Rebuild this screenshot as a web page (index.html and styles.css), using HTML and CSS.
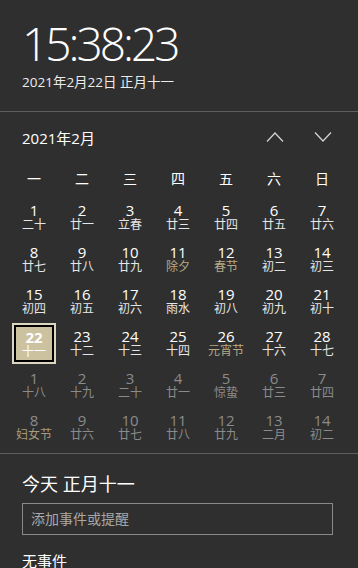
FILE: index.html
```html
<!DOCTYPE html>
<html lang="zh-CN">
<head>
  <meta charset="UTF-8" />
  <meta name="viewport" content="width=device-width, initial-scale=1.0" />
  <title>日历</title>
  <link rel="stylesheet" href="styles.css">
</head>
<body>
  <div class="painel">
    <!-- Relógio -->
    <div class="relogio">
      <div class="hora">15:38:23</div>
      <div class="data">2021年2月22日 正月十一</div>
    </div>

    <!-- Calendário -->
    <div class="calendario">
      <div class="cabecalho">
        <span class="mes">2021年2月</span>
        <div class="setas">
          <svg class="seta" width="18" height="12" viewBox="0 0 18 12"><path d="M1 10.5 L9 2 L17 10.5" fill="none" stroke="#d6d6d6" stroke-width="1.2"/></svg>
          <svg class="seta" width="18" height="12" viewBox="0 0 18 12"><path d="M1 1.5 L9 10 L17 1.5" fill="none" stroke="#d6d6d6" stroke-width="1.2"/></svg>
        </div>
      </div>

      <div class="grade">
        <div class="semana">一</div><div class="semana">二</div><div class="semana">三</div><div class="semana">四</div><div class="semana">五</div><div class="semana">六</div><div class="semana">日</div>

        <div class="dia"><b>1</b><i>二十</i></div>
        <div class="dia"><b>2</b><i>廿一</i></div>
        <div class="dia"><b>3</b><i>立春</i></div>
        <div class="dia"><b>4</b><i>廿三</i></div>
        <div class="dia"><b>5</b><i>廿四</i></div>
        <div class="dia"><b>6</b><i>廿五</i></div>
        <div class="dia"><b>7</b><i>廿六</i></div>

        <div class="dia"><b>8</b><i>廿七</i></div>
        <div class="dia"><b>9</b><i>廿八</i></div>
        <div class="dia"><b>10</b><i>廿九</i></div>
        <div class="dia feriado"><b>11</b><i>除夕</i></div>
        <div class="dia feriado"><b>12</b><i>春节</i></div>
        <div class="dia"><b>13</b><i>初二</i></div>
        <div class="dia"><b>14</b><i>初三</i></div>

        <div class="dia"><b>15</b><i>初四</i></div>
        <div class="dia"><b>16</b><i>初五</i></div>
        <div class="dia"><b>17</b><i>初六</i></div>
        <div class="dia"><b>18</b><i>雨水</i></div>
        <div class="dia"><b>19</b><i>初八</i></div>
        <div class="dia"><b>20</b><i>初九</i></div>
        <div class="dia"><b>21</b><i>初十</i></div>

        <div class="dia hoje"><b>22</b><i>十一</i></div>
        <div class="dia"><b>23</b><i>十二</i></div>
        <div class="dia"><b>24</b><i>十三</i></div>
        <div class="dia"><b>25</b><i>十四</i></div>
        <div class="dia feriado"><b>26</b><i>元宵节</i></div>
        <div class="dia"><b>27</b><i>十六</i></div>
        <div class="dia"><b>28</b><i>十七</i></div>

        <div class="dia fora"><b>1</b><i>十八</i></div>
        <div class="dia fora"><b>2</b><i>十九</i></div>
        <div class="dia fora"><b>3</b><i>二十</i></div>
        <div class="dia fora"><b>4</b><i>廿一</i></div>
        <div class="dia fora"><b>5</b><i>惊蛰</i></div>
        <div class="dia fora"><b>6</b><i>廿三</i></div>
        <div class="dia fora"><b>7</b><i>廿四</i></div>

        <div class="dia fora feriado"><b>8</b><i>妇女节</i></div>
        <div class="dia fora"><b>9</b><i>廿六</i></div>
        <div class="dia fora"><b>10</b><i>廿七</i></div>
        <div class="dia fora"><b>11</b><i>廿八</i></div>
        <div class="dia fora"><b>12</b><i>廿九</i></div>
        <div class="dia fora"><b>13</b><i>二月</i></div>
        <div class="dia fora"><b>14</b><i>初二</i></div>
      </div>
    </div>

    <!-- Agenda -->
    <div class="agenda">
      <div class="titulo">今天 正月十一</div>
      <div class="campo">添加事件或提醒</div>
      <div class="vazio">无事件</div>
    </div>
  </div>
</body>
</html>
```

FILE: styles.css
```css
:root {
  --cor-fundo: #2f2f2f;
  --cor-linha: #5e5e5e;
  --cor-texto: #ffffff;
  --cor-apagado: #8b8b8b;
  --cor-feriado: #b7a986;
  --cor-destaque: #cdc2a0;
}

* {
  box-sizing: border-box;
  margin: 0;
  padding: 0;
}

body {
  background: var(--cor-fundo);
  color: var(--cor-texto);
  font-family: 'Open Sans', 'Noto Sans CJK SC', sans-serif;
  width: 358px;
  height: 568px;
  overflow: hidden;
}

.relogio {
  height: 112px;
  padding: 20px 22px 0;
  border-bottom: 1px solid var(--cor-linha);
}

.hora {
  font-size: 46px;
  font-weight: 300;
  line-height: 46px;
  letter-spacing: -3px;
}

.data {
  font-size: 13.5px;
  line-height: 20px;
  margin-top: 6px;
  color: #ececec;
}

.cabecalho {
  display: flex;
  align-items: center;
  justify-content: space-between;
  height: 50px;
  padding: 0 26px 0 22px;
}

.mes {
  font-size: 15px;
}

.setas {
  display: flex;
  gap: 30px;
}

.grade {
  display: grid;
  grid-template-columns: repeat(7, 48px);
  grid-template-rows: 32px;
  grid-auto-rows: 42px;
  padding: 0 0 0 10px;
  height: 291px;
}

.semana {
  display: flex;
  align-items: center;
  justify-content: center;
  font-size: 14px;
}

.dia {
  display: flex;
  flex-direction: column;
  align-items: center;
  justify-content: center;
  margin: 3px 2px 0;
}

.dia b {
  font-weight: 400;
  font-size: 15px;
  line-height: 16px;
}

.dia i {
  font-style: normal;
  font-size: 12px;
  line-height: 14px;
  color: #e6e6e6;
}

.feriado i {
  color: var(--cor-feriado);
}

.fora b,
.fora i {
  color: var(--cor-apagado);
}

.fora.feriado i {
  color: #a89b7c;
}

/* Dia atual: borda clara por fora, preta por dentro */
.hoje {
  background: var(--cor-destaque);
  border: 2px solid #000;
  outline: 2px solid #ddd6bf;
  outline-offset: 0;
  margin: 5px 4px 0;
}

.hoje b {
  font-weight: 700;
}

.hoje i {
  color: #fff;
}

.agenda {
  border-top: 1px solid var(--cor-linha);
  padding: 18px 25px 0 22px;
}

.titulo {
  font-size: 18px;
  line-height: 24px;
}

.campo {
  margin-top: 7px;
  height: 32px;
  border: 1px solid #8a8a8a;
  padding: 0 8px;
  font-size: 14px;
  line-height: 30px;
  color: #a8a8a8;
}

.vazio {
  margin-top: 16px;
  font-size: 15px;
  line-height: 20px;
}
```
